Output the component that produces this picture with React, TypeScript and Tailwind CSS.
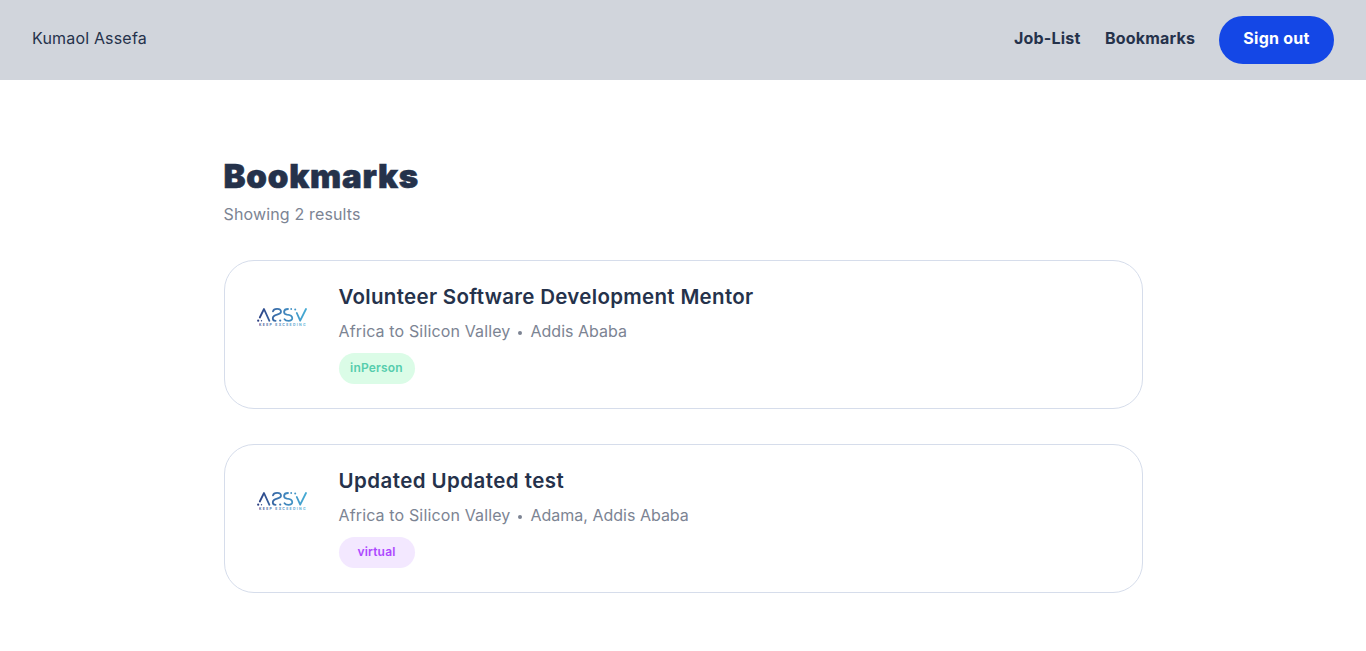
type Job = {
  title: string;
  company: string;
  place: string;
  mode: string;
  titleTracking: string;
  badge: string;
};

const jobs: Job[] = [
  {
    title: "Volunteer Software Development Mentor",
    company: "Africa to Silicon Valley",
    place: "Addis Ababa",
    mode: "inPerson",
    titleTracking: "tracking-[0.31px]",
    badge: "bg-green-100 text-[#56cdad]",
  },
  {
    title: "Updated Updated test",
    company: "Africa to Silicon Valley",
    place: "Adama, Addis Ababa",
    mode: "virtual",
    titleTracking: "tracking-[0.44px]",
    badge: "bg-purple-100 text-purple-500",
  },
];

function Logo() {
  return (
    <svg viewBox="0 0 50 20" className="h-5 w-[50px] shrink-0" fill="none" role="img" aria-label="A2SV">
      <defs>
        <linearGradient id="brand" x1="0" y1="0" x2="50" y2="0" gradientUnits="userSpaceOnUse">
          <stop offset="0" stopColor="#2a3c80" />
          <stop offset="0.5" stopColor="#3f7fb8" />
          <stop offset="1" stopColor="#45acd5" />
        </linearGradient>
      </defs>
      <g stroke="url(#brand)" strokeWidth="1.8" strokeLinecap="round" strokeLinejoin="round">
        <path d="M2.8 10.5 7 2 12.4 13.8" />
        <path d="M16 4.4C16.8 .8 24 .9 24 4.8 24 8.4 15.8 7 15.8 11.2 15.8 13 17 13.8 18.6 13.8" />
        <path d="M31 2C26 2 26 7 30 7.7 37 8.4 36.5 13.9 31.5 13.9 29.5 13.9 28.3 13.4 27.5 12.2" />
        <path d="M39.8 6 43.2 13.7 49 2" />
      </g>
      <g fill="url(#brand)">
        <circle cx="1.2" cy="13.7" r="1.1" />
        <circle cx="4.5" cy="13.7" r="0.7" />
        <circle cx="23.2" cy="13.6" r="1.1" />
        <circle cx="34.2" cy="2" r="0.9" />
        <circle cx="38.2" cy="2.4" r="1" />
      </g>
      <text x="2" y="19.2" fontSize="3.4" fontWeight="700" textLength="46.5" opacity="0.85" fill="url(#brand)" fontFamily="Inter, sans-serif">
        KEEP EXCEEDING
      </text>
    </svg>
  );
}

function JobCard({ job }: { job: Job }) {
  return (
    <article className="flex h-[149px] rounded-[30px] border border-[#d6ddeb] pt-[22px] pl-8">
      <div className="mr-8 pt-6">
        <Logo />
      </div>
      <div>
        <h2 className={`h-7 text-[20.5px] leading-7 font-semibold whitespace-nowrap ${job.titleTracking}`}>
          {job.title}
        </h2>
        <p className="mt-2 flex h-6 items-center text-base whitespace-nowrap text-[#7c8493]">
          <span className="w-[179px] tracking-[0.14px]">{job.company}</span>
          <span className="mt-[3px] mr-[9px] size-1 rounded-full bg-[#7c8493]" />
          <span>{job.place}</span>
        </p>
        <div
          className={`mt-2.5 flex h-[31px] w-[76px] items-center justify-center rounded-full pb-0.5 text-xs font-semibold tracking-[0.2px] ${job.badge}`}
        >
          {job.mode}
        </div>
      </div>
    </article>
  );
}

export default function App() {
  return (
    <div className="min-h-screen bg-white font-['Inter',sans-serif] text-[#25324b]">
      <header className="flex h-20 items-center justify-between bg-gray-300 px-8">
        <span className="pb-1 tracking-[0.18px]">Kumaol Assefa</span>
        <nav className="flex items-center gap-6 font-bold tracking-[0.2px] whitespace-nowrap">
          <a className="w-[67px] pb-1">Job-List</a>
          <a className="w-[90px] pb-1">Bookmarks</a>
          <button className="flex h-12 w-[115px] items-center justify-center rounded-full bg-blue-700 pb-1 tracking-[0.25px] text-white">
            Sign out
          </button>
        </nav>
      </header>
      <main className="mx-auto w-[919px] pt-[76px]">
        <h1 className="h-10 text-[33px] leading-10 font-black tracking-[0.8px] [-webkit-text-stroke:0.6px_#25324b]">
          Bookmarks
        </h1>
        <p className="mt-1.5 h-6 text-base tracking-[0.15px] text-[#7c8493]">Showing 2 results</p>
        <section className="mt-[34px] flex flex-col gap-[35px]">
          {jobs.map((job) => (
            <JobCard key={job.title} job={job} />
          ))}
        </section>
      </main>
    </div>
  );
}
